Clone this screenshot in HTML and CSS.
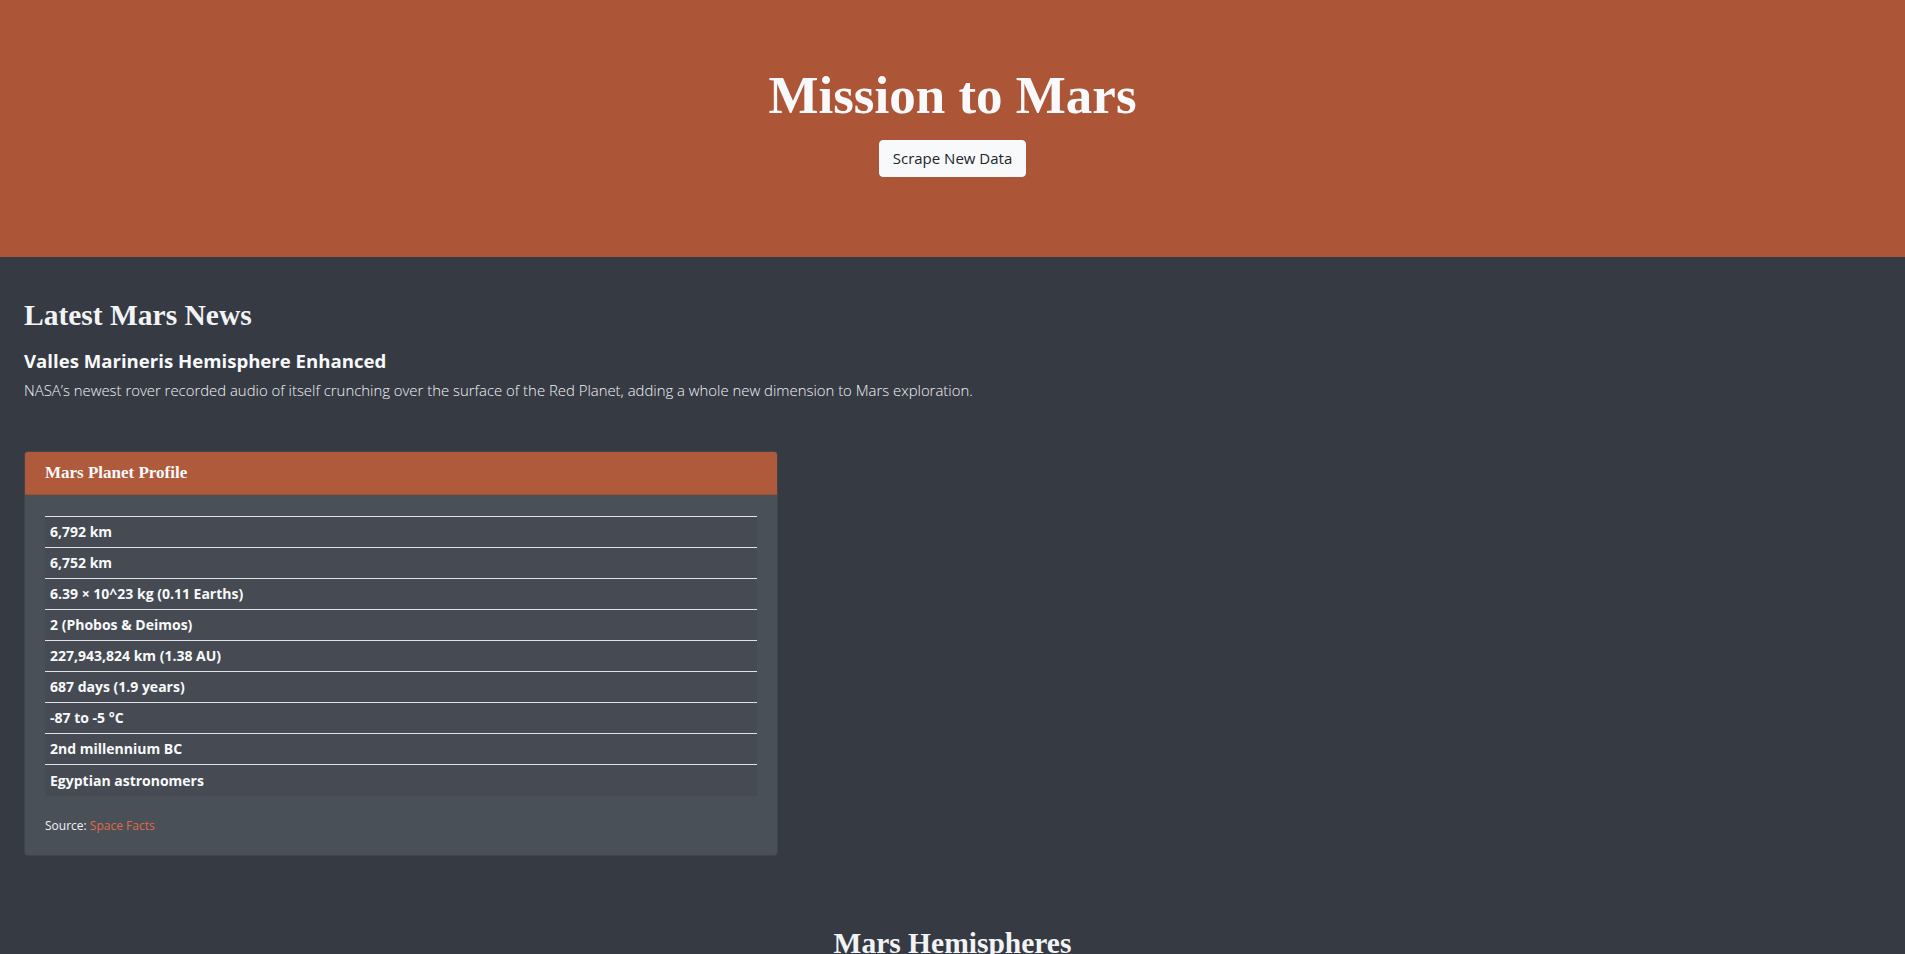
FILE: index.html
```html
<!DOCTYPE html>
<html lang="en">
<head>
<meta charset="utf-8">
<title>Mission to Mars</title>
<link rel="stylesheet" href="styles.css">
</head>
<body>
<header class="hero">
  <h1 class="hero-title">Mission to Mars</h1>
  <button class="btn-scrape" type="button">Scrape New Data</button>
</header>
<main class="page">
  <section class="news">
    <h2 class="section-title">Latest Mars News</h2>
    <h4 class="news-title">Valles Marineris Hemisphere Enhanced</h4>
    <p class="news-text">NASA’s newest rover recorded audio of itself crunching over the surface of the Red Planet, adding a whole new dimension to Mars exploration.</p>
  </section>
  <section class="card">
    <div class="card-header">Mars Planet Profile</div>
    <div class="card-body">
      <table class="facts">
        <tbody>
          <tr><td>6,792 km</td></tr>
          <tr><td>6,752 km</td></tr>
          <tr><td>6.39 × 10^23 kg (0.11 Earths)</td></tr>
          <tr><td>2 (Phobos &amp; Deimos)</td></tr>
          <tr><td>227,943,824 km (1.38 AU)</td></tr>
          <tr><td>687 days (1.9 years)</td></tr>
          <tr><td>-87 to -5 °C</td></tr>
          <tr><td>2nd millennium BC</td></tr>
          <tr><td>Egyptian astronomers</td></tr>
        </tbody>
      </table>
      <p class="source">Source: <a href="#" class="source-link">Space Facts</a></p>
    </div>
  </section>
  <h2 class="section-title centered">Mars Hemispheres</h2>
</main>
</body>
</html>
```
FILE: styles.css
```css
html, body {
  margin: 0;
  padding: 0;
}
body {
  background: #363a43;
  color: #f8f9fa;
  font-family: "Open Sans", "Noto Sans", sans-serif;
  font-size: 16px;
  min-height: 1200px;
}
.hero {
  background: #ad5637;
  height: 257px;
  box-sizing: border-box;
  padding-top: 64px;
  display: flex;
  flex-direction: column;
  align-items: center;
}
.hero-title {
  margin: 0;
  font-family: "Liberation Serif", serif;
  font-weight: 700;
  font-size: 53px;
  line-height: 1.2;
  color: #f8f9fa;
}
.btn-scrape {
  margin-top: 12px;
  background: #f8f9fa;
  color: #212529;
  border: 1px solid #f8f9fa;
  border-radius: 4px;
  font-family: "Open Sans", sans-serif;
  font-size: 15px;
  line-height: 23px;
  padding: 6px 12px;
  width: 147px;
  height: 37px;
  box-sizing: border-box;
  white-space: nowrap;
}
.page {
  padding: 0 24px;
}
.section-title {
  margin: 41px 0 0;
  font-family: "Liberation Serif", serif;
  font-weight: 700;
  font-size: 29.5px;
  line-height: 1.2;
  color: #f1f3f5;
}
.news-title {
  margin: 16px 0 0;
  font-size: 18.6px;
  font-weight: 700;
  line-height: 24px;
  color: #f8f9fa;
}
.news-text {
  margin: 5px 0 0;
  font-size: 14.9px;
  font-weight: 300;
  line-height: 24px;
  color: #f1f3f5;
}
.card {
  margin-top: 49px;
  width: 754px;
  box-sizing: border-box;
  background: #4a5058;
  border: 1px solid #40454d;
  border-radius: 4px;
  overflow: hidden;
}
.card-header {
  background: #af5a3b;
  padding: 12px 20px;
  height: 43px;
  box-sizing: border-box;
  border-bottom: 1px solid #9c4f33;
  font-family: "Liberation Serif", serif;
  font-weight: 700;
  font-size: 17px;
  line-height: 18px;
  color: #f8f9fa;
}
.card-body {
  padding: 21px 20px 20px;
}
.facts {
  width: 100%;
  border-collapse: collapse;
}
.facts td {
  background: #464b53;
  border-top: 1px solid #dee2e6;
  padding: 5px;
  height: 31px;
  box-sizing: border-box;
  font-size: 14px;
  font-weight: 700;
  line-height: 20px;
  color: #f8f9fa;
}
.source {
  margin: 20px 0 0;
  font-size: 12px;
  line-height: 19px;
  color: #f1f3f5;
}
.source-link {
  color: #e0694a;
  text-decoration: none;
}
.centered {
  text-align: center;
  margin-top: 70px;
}
```
